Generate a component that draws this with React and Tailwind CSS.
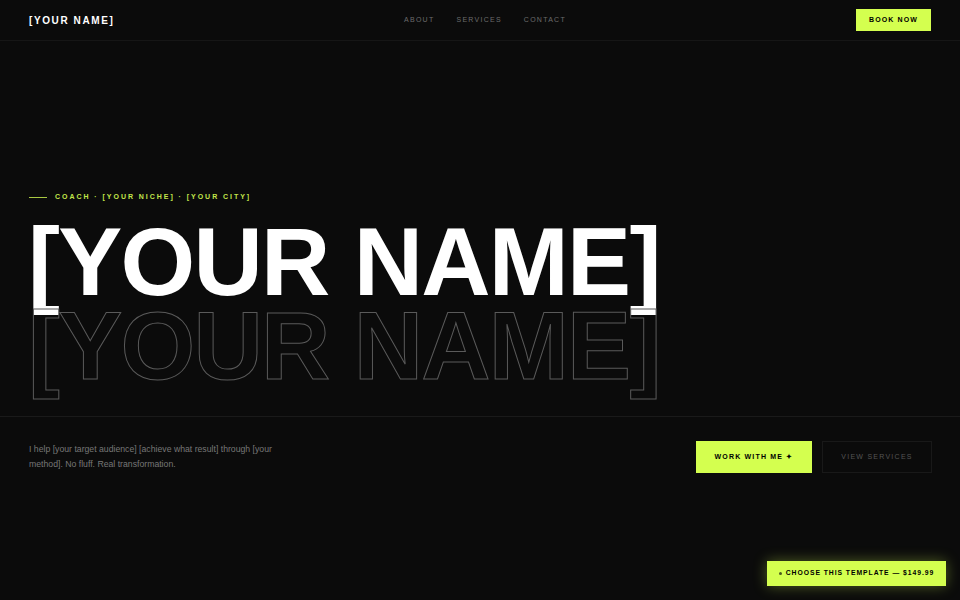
import React from 'react'

const LIME = 'bg-[#d4ff4f]'

function Nav() {
  return (
    <header className="h-[41px] border-b border-[#161616] grid grid-cols-[1fr_auto_1fr] items-center px-[29px]">
      <div className="text-[10px] font-bold tracking-[0.16em] text-white">[YOUR NAME]</div>
      <nav className="flex gap-[22px] text-[7px] tracking-[0.18em] text-[#6b6b6b] ml-[10px]">
        <a>ABOUT</a>
        <a>SERVICES</a>
        <a>CONTACT</a>
      </nav>
      <div className="flex justify-end">
        <button className={`${LIME} h-[22px] px-[13px] text-[7px] font-bold tracking-[0.16em] text-black`}>BOOK NOW</button>
      </div>
    </header>
  )
}

function Hero() {
  return (
    <section className="pt-[151px]">
      <div className="px-[29px]">
        <div className="flex items-center gap-[8px]">
          <span className="w-[18px] h-px bg-[#a8c842]" />
          <span className="text-[7px] font-bold tracking-[0.28em] text-[#c3e64a]">COACH · [YOUR NICHE] · [YOUR CITY]</span>
        </div>
        <h1 className="mt-[17px] text-[96px] font-bold leading-[0.88] tracking-[-0.018em] ml-[-1px]">
          <span className="block text-white">[YOUR NAME]</span>
          {/* outline copy underneath */}
          <span className="block text-transparent [-webkit-text-stroke:1px_#5a5a5a]">[YOUR NAME]</span>
        </h1>
      </div>
      <div className="mt-[28px] border-t border-[#1a1a1a] pl-[29px] pr-[28px] pt-[24px] flex justify-between">
        <p className="w-[248px] pt-[1px] text-[8.7px] leading-[15px] text-[#777]">
          I help [your target audience] [achieve what result] through [your method]. No fluff. Real transformation.
        </p>
        <div className="flex gap-[10px]">
          <button className={`${LIME} w-[116px] h-[32px] text-[7px] font-bold tracking-[0.17em] text-black`}>WORK WITH ME ✦</button>
          <button className="w-[110px] h-[32px] border border-[#191919] text-[7px] tracking-[0.18em] text-[#555]">VIEW SERVICES</button>
        </div>
      </div>
    </section>
  )
}

export default function App() {
  return (
    <div className="relative w-[960px] h-[600px] overflow-hidden bg-[#0b0b0b]" style={{ fontFamily: '"Liberation Sans", Arial, sans-serif' }}>
      <Nav />
      <Hero />
      <button className={`absolute left-[767px] top-[561px] w-[179px] h-[25px] ${LIME} flex items-center justify-center gap-[4px] text-[6.8px] font-bold tracking-[0.14em] text-black shadow-[0_0_14px_rgba(212,255,79,0.35)]`}>
        <span className="w-[3px] h-[3px] rounded-full bg-[#4a5a20]" />
        CHOOSE THIS TEMPLATE — $149.99
      </button>
    </div>
  )
}
